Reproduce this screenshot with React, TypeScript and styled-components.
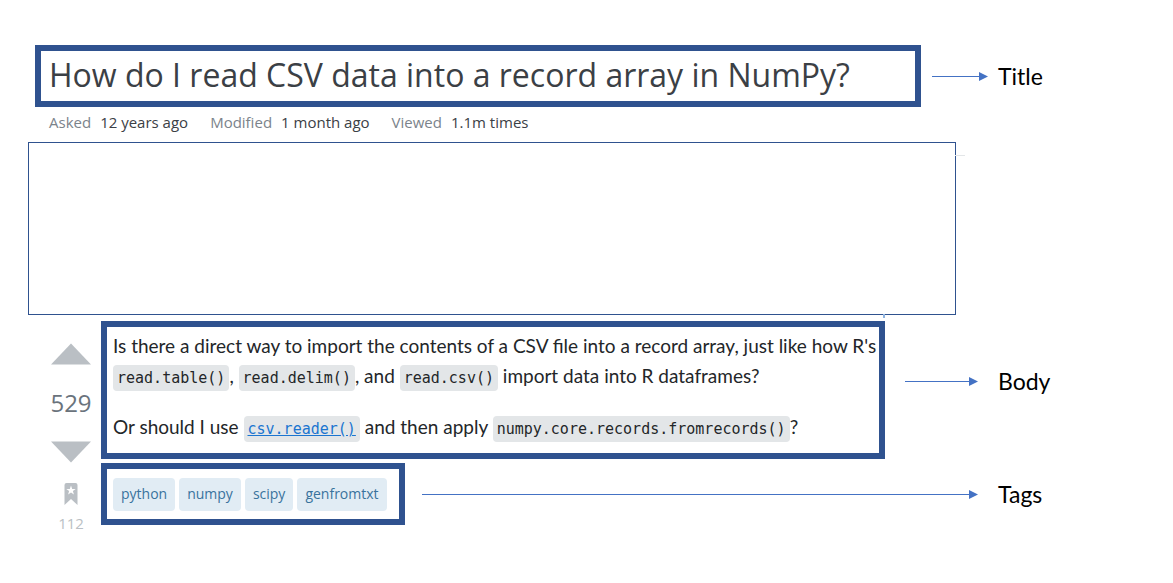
import React from 'react';
import styled, { createGlobalStyle } from 'styled-components';

const Global = createGlobalStyle`
  * { box-sizing: border-box; }
  body { margin: 0; background: #fff; }
`;

const navy = '#2f528f';
const sans = `'Open Sans', 'Noto Sans', sans-serif`;

const Page = styled.main`
  padding: 45px 0 40px 28px;
  font-family: ${sans};
  color: #232629;
`;

const Row = styled.div`
  display: flex;
  align-items: center;
`;

const TitleRow = styled(Row)`
  padding-left: 7px;
`;

const BodyRow = styled(Row)`
  align-items: flex-start;
`;

const Frame = styled.div<{ $grow?: boolean }>`
  flex: ${(p) => (p.$grow ? '1 1 0' : '0 0 auto')};
  min-width: 0;
  border: 6px solid ${navy};
`;

const TitleFrame = styled(Frame)`
  height: 62px;
  padding: 0 8px;
`;

const Title = styled.h1`
  margin: 0;
  font-size: 32px;
  line-height: 48px;
  font-weight: 400;
  color: #3b4045;
  white-space: nowrap;
`;

const Annotation = styled.div<{ $grow?: boolean; $height: number }>`
  flex: ${(p) => (p.$grow ? '1 1 0' : '0 0 auto')};
  display: flex;
  align-items: center;
  height: ${(p) => p.$height}px;
`;

const Pointer = styled.div<{ $width?: number; $before: number; $after: number }>`
  flex: ${(p) => (p.$width ? `0 0 ${p.$width}px` : '1 1 0')};
  display: flex;
  align-items: center;
  margin: 0 ${(p) => p.$after}px 0 ${(p) => p.$before}px;

  &::before {
    content: '';
    flex: 1;
    height: 1px;
    background: #4472c4;
  }
`;

const Head = styled.svg`
  display: block;
  width: 9px;
  height: 9px;
  fill: #4472c4;
`;

const Label = styled.div`
  flex: 0 0 175px;
  font-family: Lato, sans-serif;
  font-size: 23px;
  line-height: 28px;
  color: #000;
`;

const Meta = styled.dl`
  display: flex;
  gap: 22px;
  margin: 3px 0 8px 21px;
  font-size: 15px;
  line-height: 24px;
  white-space: nowrap;
`;

const MetaItem = styled.div`
  display: flex;
  gap: 9px;

  dt { color: #7b838b; }
  dd { margin: 0; color: #3b4045; }
`;

const Blank = styled.div`
  position: relative;
  height: 173px;
  margin: 0 217px 6px 0;
  border: 1px solid ${navy};

  &::before {
    content: '';
    position: absolute;
    left: 100%;
    top: 12px;
    width: 10px;
    height: 1px;
    background: #e3e6e8;
  }

  &::after {
    content: '';
    position: absolute;
    right: 70px;
    top: 100%;
    width: 2px;
    height: 4px;
    background: #8fb4e0;
  }
`;

const Post = styled.div`
  display: flex;
  align-items: flex-start;
`;

const Votes = styled.div`
  flex: 0 0 73px;
  display: flex;
  flex-direction: column;
  align-items: center;
  padding: 22px 0 0 13px;
`;

const IconButton = styled.button`
  display: block;
  padding: 0;
  border: 0;
  background: none;
  cursor: pointer;

  svg { display: block; fill: #babfc4; }
`;

const Score = styled.div`
  margin: 21px 0;
  font-size: 24px;
  line-height: 34px;
  color: #6a737c;
`;

const Saves = styled.div`
  margin-top: 8px;
  font-size: 15px;
  line-height: 20px;
  color: #babfc4;
`;

const Bookmark = styled(IconButton)`
  margin-top: 20px;
`;

const Sections = styled.div`
  flex: 1;
  min-width: 0;
  display: flex;
  flex-direction: column;
  gap: 4px;
`;

const BodyFrame = styled(Frame)`
  height: 138px;
  padding: 4px 0 0 6px;
`;

const Text = styled.p`
  margin: 0 0 21px;
  font-family: Lato, ${sans};
  font-size: 19px;
  line-height: 30px;
  white-space: nowrap;
`;

const Code = styled.code`
  padding: 4px;
  border-radius: 4px;
  background: #e3e6e8;
  font-family: 'DejaVu Sans Mono', monospace;
  font-size: 15px;
  line-height: 16px;
`;

const CodeLink = styled.a`
  color: #1b75d0;
  text-decoration: underline;
`;

const TagFrame = styled(Frame)`
  height: 62px;
  padding: 9px 12px 8px 6px;
`;

const TagList = styled.div`
  display: flex;
  gap: 4px;
`;

const Tag = styled.a`
  height: 33px;
  padding: 0 8px;
  border-radius: 4px;
  background: #e1ecf4;
  color: #39739d;
  font-size: 14px;
  line-height: 31px;
  text-decoration: none;
`;

function Arrow(props: { width?: number; before: number; after: number }) {
  return (
    <Pointer $width={props.width} $before={props.before} $after={props.after}>
      <Head viewBox="0 0 9 9" aria-hidden="true">
        <path d="M0 0L9 4.5L0 9Z" />
      </Head>
    </Pointer>
  );
}

const facts = [
  ['Asked', '12 years ago'],
  ['Modified', '1 month ago'],
  ['Viewed', '1.1m times'],
];

const tags = ['python', 'numpy', 'scipy', 'genfromtxt'];

export default function App() {
  return (
    <Page>
      <Global />
      <TitleRow>
        <TitleFrame $grow>
          <Title>How do I read CSV data into a record array in NumPy?</Title>
        </TitleFrame>
        <Annotation $height={62}>
          <Arrow width={56} before={11} after={10} />
          <Label>Title</Label>
        </Annotation>
      </TitleRow>
      <Meta>
        {facts.map(([name, value]) => (
          <MetaItem key={name}>
            <dt>{name}</dt>
            <dd>{value}</dd>
          </MetaItem>
        ))}
      </Meta>
      <Blank />
      <Post>
        <Votes>
          <IconButton aria-label="Vote up">
            <svg width="40" height="22" viewBox="0 0 40 22"><path d="M0 21.5L20 0.5L40 21.5Z" /></svg>
          </IconButton>
          <Score>529</Score>
          <IconButton aria-label="Vote down">
            <svg width="40" height="22" viewBox="0 0 40 22"><path d="M0 0.5L20 21.5L40 0.5Z" /></svg>
          </IconButton>
          <Bookmark aria-label="Save">
            <svg width="14" height="22" viewBox="0 0 14 22">
              <path
                fillRule="evenodd"
                d="M2.5 0H11.5Q13.5 0 13.5 2V22L7 16L0.5 22V2Q0.5 0 2.5 0ZM7 2.4L5.8 5.9L2.3 6L5.1 8.1L4.1 11.6L7 9.5L9.9 11.6L8.9 8.1L11.7 6L8.2 5.9Z"
              />
            </svg>
          </Bookmark>
          <Saves>112</Saves>
        </Votes>
        <Sections>
          <BodyRow>
            <BodyFrame $grow>
              <Text>
                Is there a direct way to import the contents of a CSV file into a record array, just like how R's
                <br />
                <Code>read.table()</Code>, <Code>read.delim()</Code>, and <Code>read.csv()</Code> import data into R
                dataframes?
              </Text>
              <Text>
                Or should I use{' '}
                <Code><CodeLink href="#csv-reader">csv.reader()</CodeLink></Code> and then apply{' '}
                <Code>numpy.core.records.fromrecords()</Code>?
              </Text>
            </BodyFrame>
            <Annotation $height={120}>
              <Arrow width={73} before={20} after={20} />
              <Label>Body</Label>
            </Annotation>
          </BodyRow>
          <Row>
            <TagFrame>
              <TagList>
                {tags.map((tag) => (
                  <Tag key={tag} href={`#${tag}`}>{tag}</Tag>
                ))}
              </TagList>
            </TagFrame>
            <Annotation $grow $height={62}>
              <Arrow before={17} after={20} />
              <Label>Tags</Label>
            </Annotation>
          </Row>
        </Sections>
      </Post>
    </Page>
  );
}
